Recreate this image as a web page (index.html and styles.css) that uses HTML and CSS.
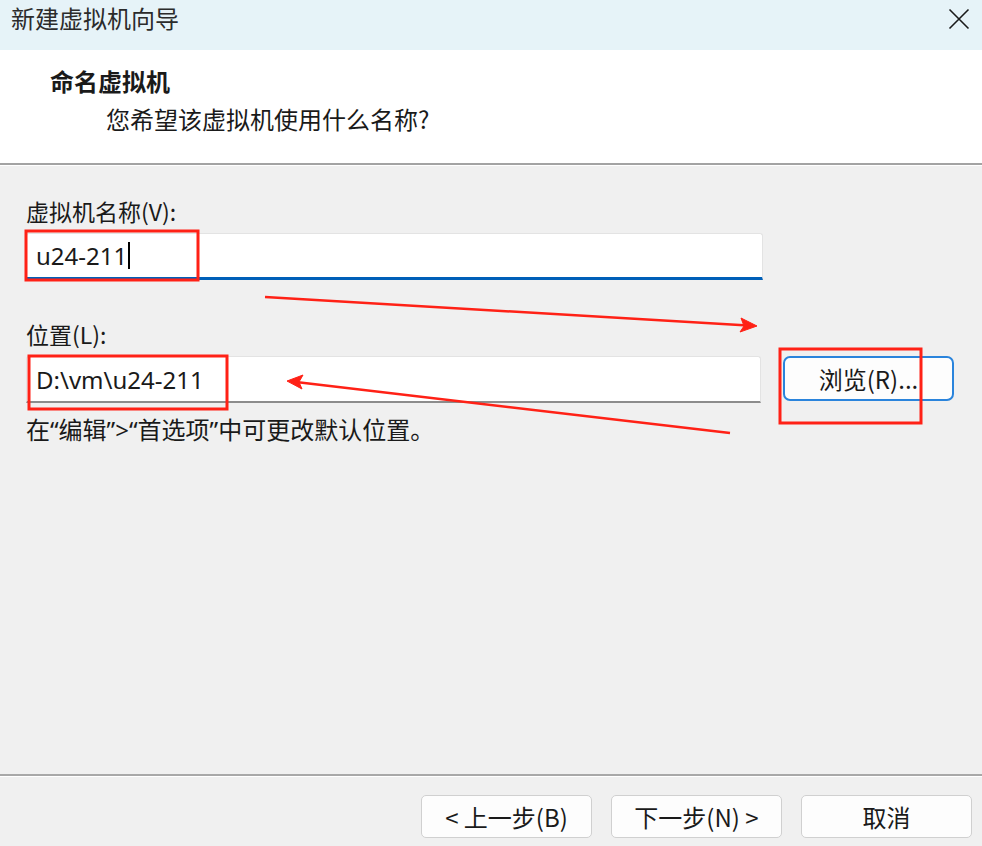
FILE: index.html
```html
<!DOCTYPE html>
<html lang="zh-CN">
<head>
<meta charset="utf-8">
<title>新建虚拟机向导</title>
<link rel="stylesheet" href="styles.css">
</head>
<body>
<div class="dialog">
  <div class="titlebar">
    <span class="title">新建虚拟机向导</span>
    <svg class="close" width="22" height="22" viewBox="0 0 22 22"><path d="M1.5 1.5 L20.5 20.5 M20.5 1.5 L1.5 20.5" stroke="#1a1a1a" stroke-width="1.6" fill="none"/></svg>
  </div>
  <div class="header">
    <div class="h-title">命名虚拟机</div>
    <div class="h-sub">您希望该虚拟机使用什么名称?</div>
  </div>
  <div class="content">
    <div class="label">虚拟机名称(V):</div>
    <div class="row">
      <div class="input focused"><span class="val">u24-211</span><span class="caret"></span></div>
    </div>
    <div class="label second">位置(L):</div>
    <div class="row">
      <div class="input"><span class="val">D:\vm\u24-211</span></div>
      <button class="btn browse">浏览(R)...</button>
    </div>
    <div class="hint">在“编辑”&gt;“首选项”中可更改默认位置。</div>
  </div>
  <div class="footer">
    <button class="btn nav">&lt; 上一步(B)</button>
    <button class="btn nav">下一步(N) &gt;</button>
    <button class="btn nav">取消</button>
  </div>
  <svg class="annot" width="982" height="846" viewBox="0 0 982 846">
    <g fill="none" stroke="#ff2116" stroke-width="3">
      <rect x="26" y="231" width="172" height="49"/>
      <rect x="29" y="356" width="198" height="53"/>
      <rect x="780" y="349" width="141" height="74"/>
    </g>
    <g stroke="#ff2116" stroke-width="2.5" fill="#ff2116">
      <line x1="265" y1="297" x2="748" y2="325.5"/>
      <path d="M757 326 L741 318 L744 326 L740 332 Z" stroke-width="1"/>
      <line x1="730" y1="433" x2="296" y2="382"/>
      <path d="M287 381 L303 375 L299 382 L302 389 Z" stroke-width="1"/>
    </g>
  </svg>
</div>
</body>
</html>
```
FILE: styles.css
```css
* { box-sizing: border-box; }
html, body { margin: 0; padding: 0; }
body {
  width: 982px;
  height: 846px;
  overflow: hidden;
  background: #f0f0f0;
  font-family: "Noto Sans CJK SC", "Noto Sans", sans-serif;
  color: #1a1a1a;
}
.dialog {
  position: relative;
  width: 982px;
  height: 846px;
  display: flex;
  flex-direction: column;
}
.titlebar {
  height: 50px;
  background: #e6f3f8;
  display: flex;
  align-items: flex-start;
  justify-content: space-between;
  padding: 3px 12px 0 11px;
}
.title {
  font-size: 24px;
  line-height: 30px;
  color: #2b2b2b;
}
.close { margin-top: 5px; }
.header {
  height: 115px;
  background: #ffffff;
  border-bottom: 2px solid #a3a3a3;
  padding: 16px 0 0 50px;
}
.h-title {
  font-size: 24px;
  font-weight: bold;
  line-height: 30px;
}
.h-sub {
  font-size: 24px;
  line-height: 30px;
  padding-left: 56px;
  margin-top: 8px;
}
.content {
  flex: 1;
  border-top: 1px solid #ffffff;
  padding: 29px 0 0 26px;
}
.label {
  font-size: 23px;
  line-height: 32px;
}
.label.second { margin-top: 38px; }
.row {
  display: flex;
  align-items: flex-start;
  margin-top: 6px;
}
.input {
  width: 735px;
  height: 47px;
  background: #ffffff;
  border: 1px solid #e3e3e3;
  border-bottom: 2px solid #8c8c8c;
  border-radius: 3px 3px 0 0;
  display: flex;
  align-items: center;
  padding-left: 9px;
  font-family: "Noto Sans", "Noto Sans CJK SC", sans-serif;
  font-size: 24px;
  color: #1a1a1a;
}
.input.focused {
  width: 737px;
  border-bottom: 3px solid #005fb8;
}
.caret {
  display: inline-block;
  width: 2px;
  height: 27px;
  background: #000;
  margin-left: 1px;
}
.btn {
  font-family: "Noto Sans CJK SC", "Noto Sans", sans-serif;
  font-size: 24px;
  color: #1a1a1a;
  background: #fdfdfd;
  border: 1px solid #d0d0d0;
  border-radius: 5px;
  padding: 0;
  margin: 0;
}
.browse {
  width: 171px;
  height: 45px;
  margin-left: 22px;
  border: 2px solid #2a84dc;
  border-radius: 7px;
}
.hint {
  font-family: "Noto Sans", "Noto Sans CJK SC", sans-serif;
  font-size: 24px;
  line-height: 32px;
  margin-top: 11px;
}
.footer {
  height: 72px;
  border-top: 2px solid #a8a8a8;
  box-shadow: inset 0 1px 0 #ffffff;
  display: flex;
  justify-content: flex-end;
  gap: 19px;
  padding: 19px 10px 0 0;
}
.nav {
  width: 171px;
  height: 43px;
}
.annot {
  position: absolute;
  left: 0;
  top: 0;
  pointer-events: none;
}
```
